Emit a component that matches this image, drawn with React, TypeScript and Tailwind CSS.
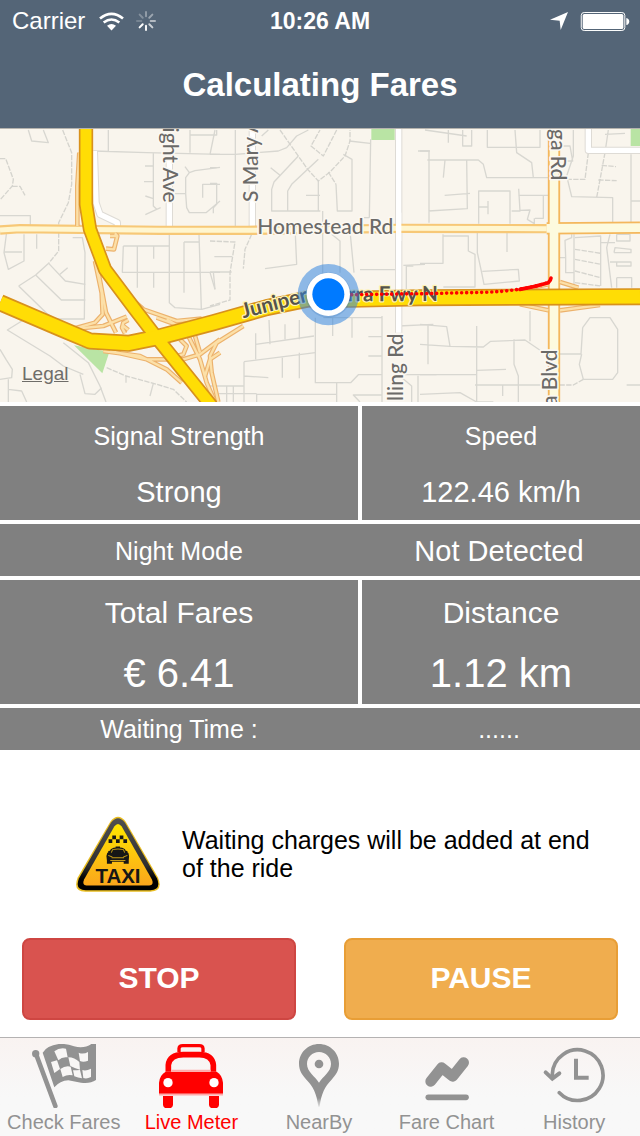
import type { ReactNode } from "react";

/* ---------- Status bar ---------- */

function WifiIcon() {
  return (
    <svg viewBox="0 0 75 56" className="h-[19px] w-[25px]" aria-hidden="true">
      <g fill="none" stroke="#fff" strokeWidth="8">
        <path d="M3 19Q37.500 -9 72 19" />
        <path d="M14 31Q37.500 13 61 31" />
      </g>
      <path d="M24 41Q37.500 30 51 41L37.500 55Z" fill="#fff" />
    </svg>
  );
}

const spokes = [0.35, 0.42, 0.55, 0.7, 0.95, 1, 0.2, 0.28];

function Spinner() {
  return (
    <svg viewBox="-30 -30 60 60" className="h-5 w-5" aria-hidden="true">
      {spokes.map((opacity, i) => (
        <path
          key={i}
          d="M0 -14V-27"
          stroke="#fff"
          strokeWidth="6"
          strokeLinecap="round"
          opacity={opacity}
          transform={`rotate(${i * 45})`}
        />
      ))}
    </svg>
  );
}

function StatusBar() {
  return (
    <div className="grid h-[42px] grid-cols-[1fr_auto_1fr] items-center px-3">
      <div className="flex items-center">
        <span className="text-2xl">Carrier</span>
        <span className="ml-3.5 flex items-center gap-3">
          <WifiIcon />
          <Spinner />
        </span>
      </div>
      <span className="text-[23px] font-bold">10:26 AM</span>
      <div className="flex items-center justify-end gap-3">
        <svg viewBox="0 0 54 54" className="h-[18px] w-[18px]" aria-hidden="true">
          <path d="M54 0L32 54L29 26L0 23Z" fill="#fff" />
        </svg>
        <svg viewBox="0 0 148 58" className="-mr-0.5 h-[19px] w-[50px]" aria-hidden="true">
          <rect x="1.500" y="1.500" width="133" height="55" rx="9" fill="none" stroke="#fff" strokeWidth="3" />
          <rect x="6" y="6" width="124" height="46" rx="5" fill="#fff" />
          <path d="M139 18Q148 20 148 29T139 40Z" fill="#fff" />
        </svg>
      </div>
    </div>
  );
}

/* ---------- Map ---------- */

const minorRoads = [
  // west
  "M85 12L95 45L145 50L130 12M0 269H91V310M110 325V368M20 318L12 380L25 430L72 405V325M12 378H66",
  "M107 447L184 522H256M146 412L196 465L256 475M180 445L203 425M75 579L22 612L150 690L190 720L250 745M75 579L88 570",
  "M75 579H253L255 380L247 335H218M56 480L140 562L165 579M56 480L107 447L146 412",
  "M325 12V75M280 75L440 80L660 85M460 80V240L470 250M435 120H460M432 167H460M436 210L460 218M436 266L470 250L482 245M570 12V80M570 27H650V12",
  "M525 203H557L560 245L568 260H618L660 225M557 203V155L568 140L555 122M568 140L585 134L660 124M608 215V175H660M706 12V300M630 85H706",
  "M508 325V530L525 545L605 550L660 535M370 360H508M370 360L367 439H660M412 360V485M461 360V398M461 439V485M552 348V500M552 348H597M597 325L604 550M630 439L645 490",
  "M378 750V770M460 772L450 810M0 670L18 700L37 730L35 755L0 760M25 760V828M25 790L65 795L80 828",
  "M190 650L265 710L300 780L318 828M240 745L255 803L285 805L305 785M630 85L645 12",
  // centre
  "M706 85L835 75L860 65L890 30L925 12M785 30L805 12M630 125H650M630 172H650V235L640 245V262",
  "M812 125L840 148M895 90L822 168L815 190V255H961M955 165V255M1008 175L1012 255H1056V100L1030 85M863 253V195L875 175L955 100M918 208H960M1048 45L1110 52",
  "M1112 40L1108 275M1110 275H1092M968 255V450M886 325L890 415L795 428M643 392H697M630 438H695M640 438L645 490",
  "M995 325L1020 345V440M1050 315L1062 440M1080 431H1190M1240 420H1219V490M1210 418L1275 415M1195 600L1300 595M1105 632H1146M1105 690H1146M1146 570V828M970 575H1146M998 575V630M1056 575V635M946 575V770H1052L1075 746L1146 746",
  "M767 622V700M767 655L942 630M732 707L946 680M732 707V828M732 750L805 755M807 582L810 655M855 595V640M898 582V640M847 695V755M898 680V757M770 805H1010M770 805V828M630 780H732M680 782V828M700 782V828M655 803H770",
  "M1010 770V828M1080 828L1060 807H1146M1190 746H1310M1195 746L1235 780V828M1254 749V828M1275 12L1400 30M1254 75H1290",
  // east
  "M1260 75H1287V290M1345 12V50M1388 12V60H1415V12M1462 12V64H1620V12M1545 12L1550 80L1595 110L1600 155M1282 102H1435L1450 115L1460 155H1645M1335 102L1330 155M1400 102L1402 248L1285 255M1334 208L1410 202",
  "M1436 293V195H1530V293M1436 243H1464M1464 225V265M1556 188L1560 255H1535M1555 208H1645M1630 208V277H1605M1560 253L1590 252L1582 280L1603 293V277",
  "M1329 325V412H1260M1328 330H1405V375L1425 385V483H1330M1521 320V378M1432 320V380L1445 440L1452 475L1558 465L1555 430L1447 436",
  "M1260 595L1340 602L1350 661L1450 663L1472 646L1575 642L1628 678M1284 595V715M1260 655L1350 661M1430 600V828M1590 555V646M1542 640V715L1555 750V828M1260 746H1430M1430 733L1518 730M1425 777H1645M1508 777V810M1260 805L1380 800L1430 828H1480",
  "M1720 12V90L1700 150L1715 212L1838 215V293M1680 60H1710L1718 105H1700M1825 12L1815 80M1815 25L1875 22M1893 85V290M1893 225H1920",
  "M1680 395H1697L1695 343L1715 335V325M1697 395V440H1720M1722 325V480M1725 335L1802 330V480M1802 350H1845M1830 325L1820 365L1835 485",
  "M1850 325V345H1890V325H1850M1842 380L1845 365L1893 370V380H1842M1830 408H1893V420H1850V408M1850 455H1895V485M1850 455V485M1680 684H1745M1745 684L1738 715L1750 760M1748 605L1770 575H1830L1853 610V740L1838 760H1750M1748 605L1743 684M1880 777H1920",
];

const dashedRoads = [
  "M188 12L215 80V175L205 230L176 290V375L146 412",
  "M0 98H17L40 160L37 180L0 222M37 181H60L75 208",
  "M320 725L378 750L460 772L520 790L560 828",
  "M840 12L923 130L955 165L990 138L1035 90L1050 45V12M1010 12L970 90L933 60L960 12M985 138L1008 175",
  "M755 325L735 370L730 428M630 345L705 348L690 440V522L630 540",
  "M1765 80L1755 160H1700M1815 80L1790 215M1805 118L1848 122M1795 162L1850 164",
  "M1725 370L1802 382M1725 400L1802 415M1725 435L1802 455M1725 470L1802 480M1750 760L1720 777H1680",
];

const ramps = [
  "M238 80L232 180V300",
  "M285 405L305 500L308 565L285 590L225 607",
  "M290 410L318 560L348 620",
  "M230 608L310 600L380 572",
  "M352 480L430 550L530 585L605 578",
  "M345 322L352 330L342 370L318 368M348 330L330 330",
  "M385 582L370 590L366 605L375 622M370 600L385 612",
  "M310 675L420 690L500 730L545 770M330 675L440 700L550 700L600 685L660 640",
  "M470 575L540 600M500 580L550 610M540 640L560 660L550 685L530 690",
  "M565 630L600 700L620 770L645 828M585 630L600 680",
  "M730 600L650 650L630 690L635 740L655 828",
  "M660 680L630 700L615 750",
  "M1560 535L1645 553M1680 553L1800 537M1680 468L1735 485M1560 492L1645 475",
];

const freeway = "M0 530L180 607L270 645L385 652L470 635L640 590L800 545L930 518L1050 520L1260 515L1920 512";
const crossFreeway = "M258 6V235L270 310L315 430L405 550L470 635L635 840";
const homestead = "M0 312L60 308L480 313L740 313L1200 307L1640 308";
const wideRoads = ["M1662 6V828", "M1640 307L1920 305"];
const whiteRoads = ["M508 95V300", "M757 12V300", "M1196 6V620", "M283 75L288 230L300 265L352 290V310", "M1765 6V73H1920"];

function Roads({ paths, color, width }: { paths: string[]; color: string; width: number }) {
  return (
    <g fill="none" stroke={color} strokeWidth={width} strokeLinejoin="round">
      {paths.map((d) => (
        <path key={d} d={d} />
      ))}
    </g>
  );
}

function RouteMap() {
  return (
    <div className="relative overflow-hidden bg-[#f9f5ed]">
      <svg viewBox="0 9 1920 819" className="block h-auto w-full" role="img" aria-label="Map of the current ride">
        <g fill="#b9e4a4">
          <path d="M222 658L328 678L307 742L275 710Z" />
          <path d="M1114 6H1184V42H1114Z" />
          <path d="M1892 6H1920V60H1892Z" />
        </g>
        <Roads paths={minorRoads} color="#d8d7d1" width={4} />
        <g strokeDasharray="16 4">
          <Roads paths={dashedRoads} color="#d5d4ce" width={4} />
        </g>
        <Roads paths={whiteRoads} color="#dedbd5" width={22} />
        <Roads paths={whiteRoads} color="#ffffff" width={16} />
        <Roads paths={[homestead]} color="#f7c877" width={28} />
        <Roads paths={wideRoads} color="#f4b75c" width={37} />
        <Roads paths={ramps} color="#ecb26d" width={14} />
        <Roads paths={ramps} color="#fce0a8" width={7} />
        <Roads paths={[homestead]} color="#fff6d0" width={15} />
        <Roads paths={wideRoads} color="#fdfade" width={26} />
        <Roads paths={["M1196 260V345"]} color="#fff" width={16} />
        <Roads paths={[freeway]} color="#d8911c" width={51} />
        <Roads paths={[crossFreeway]} color="#d8911c" width={43} />
        <Roads paths={[crossFreeway]} color="#ffdd05" width={33} />
        <Roads paths={[freeway]} color="#ffdd05" width={41} />

        <g
          fontFamily="Lato, sans-serif"
          fontSize="63"
          fontWeight="500"
          fill="#6b6a68"
          stroke="#fbf8f2"
          strokeWidth="10"
          strokeLinejoin="round"
          paintOrder="stroke"
        >
          <text x="772" y="325">Homestead Rd</text>
          <text transform="translate(490 230) rotate(90)" textAnchor="end">ight Ave</text>
          <text transform="translate(773 228) rotate(-90)">S Mary A</text>
          <text transform="translate(1654 163) rotate(90)" textAnchor="end">ga Rd</text>
          <text transform="translate(1210 622) rotate(-90)" textAnchor="end">lling Rd</text>
          <text transform="translate(1670 670) rotate(-90)" textAnchor="end">a Blvd</text>
        </g>
        <path id="freeway-label" d="M730 577L920 528L1050 526L1920 523" fill="none" />
        <text
          fontFamily="Lato, sans-serif"
          fontSize="62"
          fontWeight="700"
          fill="#55534b"
          stroke="#fff3b5"
          strokeWidth="7"
          strokeLinejoin="round"
          paintOrder="stroke"
        >
          <textPath href="#freeway-label">Junipero Serra Fwy N</textPath>
        </text>

        <path
          d="M1055 506L1260 503L1450 499Q1560 496 1640 471"
          fill="none"
          stroke="#ff0000"
          strokeWidth="11"
          strokeLinecap="round"
          strokeDasharray="0 15"
        />
        <path
          d="M1560 490Q1605 482 1645 470Q1652 464 1653 456"
          fill="none"
          stroke="#ff0000"
          strokeWidth="11"
          strokeLinecap="round"
        />

        <circle cx="985" cy="506" r="92" fill="#2e83de" opacity="0.53" />
        <circle cx="985" cy="507" r="68" fill="#1c5fa8" opacity="0.18" />
        <circle cx="985" cy="505" r="65" fill="#fff" />
        <circle cx="985" cy="505" r="48" fill="#007aff" />
      </svg>
      <a href="#legal" className="absolute bottom-3.5 left-[22px] text-[19px] text-[#6f6d69] underline">
        Legal
      </a>
    </div>
  );
}

/* ---------- Readings ---------- */

function Reading({ label, value, large = false }: { label: string; value: string; large?: boolean }) {
  return (
    <div className={large ? "bg-[#808080] pt-0.5 leading-[61px]" : "bg-[#808080] pt-0.5 leading-[56px]"}>
      <dt className={large ? "text-[30px]" : "text-[25px]"}>{label}</dt>
      <dd className={large ? "text-[40px]" : "text-[29px]"}>{value}</dd>
    </div>
  );
}

function Readings() {
  return (
    <dl className="grid grid-cols-[358fr_278fr] gap-1 pt-1 text-center text-white">
      <Reading label="Signal Strength" value="Strong" />
      <Reading label="Speed" value="122.46 km/h" />
      <div className="col-span-2 grid grid-cols-[358fr_282fr] bg-[#808080] pt-0.5 leading-[50px]">
        <dt className="text-[25px]">Night Mode</dt>
        <dd className="text-[29px]">Not Detected</dd>
      </div>
      <Reading label="Total Fares" value="€ 6.41" large />
      <Reading label="Distance" value="1.12 km" large />
      <div className="col-span-2 grid grid-cols-[358fr_282fr] bg-[#808080] text-[25px] leading-[42px]">
        <dt>Waiting Time :</dt>
        <dd>......</dd>
      </div>
    </dl>
  );
}

/* ---------- Notice ---------- */

function TaxiSign() {
  return (
    <svg viewBox="49 49 250 226" className="h-[76px] w-[84px] shrink-0" role="img" aria-label="Taxi">
      <defs>
        <linearGradient id="sign-face" x1="0" y1="0" x2="0" y2="1">
          <stop offset="0" stopColor="#ffe600" />
          <stop offset="1" stopColor="#fba61c" />
        </linearGradient>
        <linearGradient id="sign-edge" x1="0" y1="0" x2="0" y2="1">
          <stop offset="0" stopColor="#505050" />
          <stop offset="0.65" stopColor="#303030" />
          <stop offset="0.85" stopColor="#000" />
        </linearGradient>
      </defs>
      <path
        d="M151 66Q174 36 197 66L293 232Q310 273 270 274H77Q38 273 54 232Z"
        fill="#e9bd20"
      />
      <path
        d="M153 69Q174 42 195 69L290 234Q304 269 270 270H78Q44 269 58 234Z"
        fill="url(#sign-edge)"
      />
      <path
        d="M163 80Q174 65 185 80L275 238Q282 255 267 256H80Q66 255 73 238Z"
        fill="url(#sign-face)"
      />
      <g fill="#161616">
        <path d="M157 107H168V118H157ZM179 107H190V118H179ZM146 118H157V129H146ZM168 118H179V129H168ZM190 118H201V129H190Z" />
        <path d="M167 140H180V143Q194 144 197 152L202 153V157L205 159Q209 168 206 181V191H191V185H156V191H141V181Q137 168 142 159L145 157V153L150 152Q154 144 167 143Z" />
      </g>
      <path
        d="M154 158L158 149Q174 145 190 149L194 158M145 166L157 171M202 166L190 171M155 173H192M151 181H196"
        fill="none"
        stroke="#c39a16"
        strokeWidth="3"
      />
      <text
        x="174"
        y="247"
        textAnchor="middle"
        fontFamily="Liberation Sans, Arial, sans-serif"
        fontWeight="700"
        fontSize="61"
        fill="#161616"
      >
        TAXI
      </text>
    </svg>
  );
}

/* ---------- Tab bar ---------- */

const flagIcon = (
  <svg viewBox="96 42 192 192" className="h-16 w-16" aria-hidden="true">
    <path d="M108 72L166 228" stroke="#929292" strokeWidth="14" strokeLinecap="round" />
    <circle cx="107" cy="71" r="11" fill="#929292" />
    <path
      d="M128 68Q140 47 176 42Q198 40 222 49Q252 57 274 42H288V150Q270 162 243 158L205 151Q180 152 163 172Z"
      fill="#929292"
    />
    <g fill="#f8f6f5">
      <path d="M163 64Q178 52 198 56L203 82Q187 79 175 91Z" />
      <path d="M236 68Q250 74 264 66V92Q250 98 240 93Z" />
      <path d="M153 96L171 91L180 117L163 129Z" />
      <path d="M205 82Q224 82 238 96L240 119Q226 116 211 108Z" />
      <path d="M181 117Q196 106 212 110L218 136Q203 132 188 141Z" />
      <path d="M247 120Q258 124 273 116V141Q260 148 250 144Z" />
      <path d="M219 121Q231 121 240 120L246 145Q234 143 223 139Z" />
    </g>
  </svg>
);

const carIcon = (
  <svg viewBox="477 42 192 192" className="h-16 w-16" aria-hidden="true">
    <path d="M537 66V55Q538 47 548 47H598Q608 47 609 55V66" fill="none" stroke="#ff0000" strokeWidth="10" />
    <path
      d="M505 125V105Q509 74 550 74H598Q636 74 640 105V125"
      fill="none"
      stroke="#ff0000"
      strokeWidth="17"
    />
    <path d="M497 125H650Q667 135 669 158V191H477V158Q479 135 497 125Z" fill="#ff0000" />
    <path d="M477 194H669M514 122H632" stroke="#ffaaaa" strokeWidth="5" />
    <path d="M489 198H519V224Q518 234 508 234H500Q490 234 489 224ZM627 198H657V224Q656 234 646 234H638Q628 234 627 224Z" fill="#ff0000" />
    <circle cx="504" cy="158" r="14" fill="#fff" />
    <circle cx="642" cy="158" r="14" fill="#fff" />
  </svg>
);

const pinIcon = (
  <svg viewBox="141 42 192 192" className="h-16 w-16" aria-hidden="true">
    <defs>
      <linearGradient id="pin-fade" x1="0" y1="0" x2="0" y2="1">
        <stop offset="0.86" stopColor="#929292" />
        <stop offset="1" stopColor="#929292" stopOpacity="0.2" />
      </linearGradient>
    </defs>
    <path
      fillRule="evenodd"
      d="M237 42C270 42 297 68 297 101C297 123 286 136 274 150C255 170 244 190 239 230H235C230 190 219 170 200 150C188 136 177 123 177 101C177 68 204 42 237 42ZM237 66C217 66 201 82 201 102C201 126 226 140 237 158C248 140 273 126 273 102C273 82 257 66 237 66Z"
      fill="url(#pin-fade)"
    />
    <circle cx="237" cy="102" r="13" fill="#929292" />
  </svg>
);

const chartIcon = (
  <svg viewBox="-15 42 192 192" className="h-16 w-16" aria-hidden="true">
    <g fill="none" stroke="#929292" strokeLinecap="round">
      <path d="M32 154L65 113L98 139L131 98" strokeWidth="32" strokeLinejoin="round" />
      <path d="M25 202H138" strokeWidth="17" />
    </g>
  </svg>
);

const historyIcon = (
  <svg viewBox="369 42 192 192" className="h-16 w-16" aria-hidden="true">
    <g fill="none" stroke="#929292" strokeLinecap="round">
      <path d="M421 188A76 76 0 1 0 400 132V145" strokeWidth="11" />
      <path d="M471 92V143H503" strokeWidth="12" strokeLinecap="square" />
      <path d="M380 127L400 146L421 130" strokeWidth="12" />
    </g>
  </svg>
);

const tabs: { label: string; icon: ReactNode; active?: boolean }[] = [
  { label: "Check Fares", icon: flagIcon },
  { label: "Live Meter", icon: carIcon, active: true },
  { label: "NearBy", icon: pinIcon },
  { label: "Fare Chart", icon: chartIcon },
  { label: "History", icon: historyIcon },
];

function TabBar() {
  return (
    <nav className="grid grid-cols-5 border-t border-[#b4b2b2] bg-linear-to-b from-[#f9f3f1] to-[#f8f8f8] to-60% pt-1.5 pr-0.5">
      {tabs.map((tab) => (
        <a
          key={tab.label}
          href="#tab"
          aria-current={tab.active ? "page" : undefined}
          className={
            tab.active
              ? "flex flex-col items-center text-xl leading-7 whitespace-nowrap text-[#ff0000]"
              : "flex flex-col items-center text-xl leading-7 whitespace-nowrap text-[#929292]"
          }
        >
          {tab.icon}
          {tab.label}
        </a>
      ))}
    </nav>
  );
}

export default function App() {
  return (
    <div className="flex min-h-screen flex-col bg-white font-['Liberation_Sans',Arial,sans-serif] text-black">
      <header className="border-b border-[#b5b3ae] bg-[#546577] text-white">
        <StatusBar />
        <h1 className="text-center text-[33px] leading-[86px] font-bold">Calculating Fares</h1>
      </header>
      <main className="flex-1">
        <RouteMap />
        <Readings />
        <div className="flex items-center gap-[22px] pt-[66px] pr-10 pb-[46px] pl-19">
          <TaxiSign />
          <p className="text-[25px] leading-7">Waiting charges will be added at end of the ride</p>
        </div>
        <div className="grid grid-cols-2 gap-12 px-[22px] pb-4 text-[30px] font-bold text-white">
          <button type="button" className="h-[82px] rounded-lg border-2 border-[#ce4642] bg-[#d9534f] pb-1">
            STOP
          </button>
          <button type="button" className="h-[82px] rounded-lg border-2 border-[#e89e36] bg-[#f0ad4e] pb-1">
            PAUSE
          </button>
        </div>
      </main>
      <TabBar />
    </div>
  );
}
